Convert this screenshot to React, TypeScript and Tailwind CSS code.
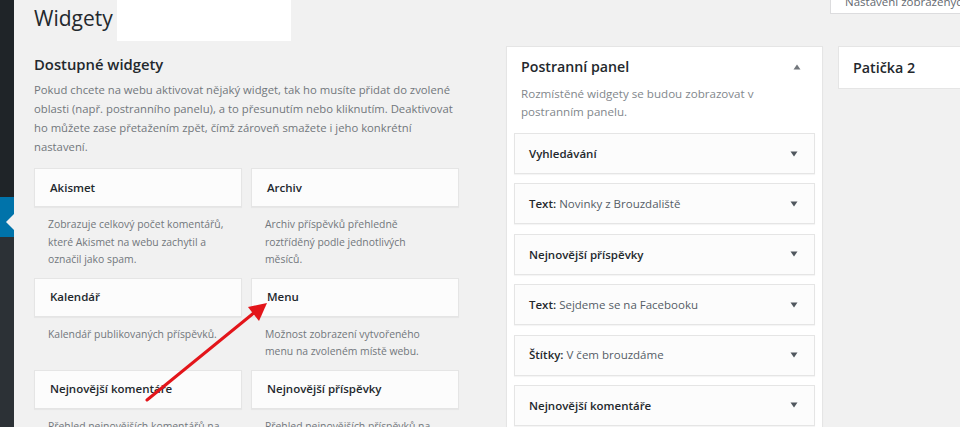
import React from 'react';

const font = { fontFamily: '"Open Sans", "Noto Sans", sans-serif' };

const available = [
  { name: 'Akismet', desc: 'Zobrazuje celkový počet komentářů, které Akismet na webu zachytil a označil jako spam.' },
  { name: 'Archiv', desc: 'Archiv příspěvků přehledně roztříděný podle jednotlivých měsíců.' },
  { name: 'Kalendář', desc: 'Kalendář publikovaných příspěvků.' },
  { name: 'Menu', desc: 'Možnost zobrazení vytvořeného menu na zvoleném místě webu.' },
  { name: 'Nejnovější komentáře', desc: 'Přehled nejnovějších komentářů na webu.' },
  { name: 'Nejnovější příspěvky', desc: 'Přehled nejnovějších příspěvků na webu.' },
];

const placed = [
  { type: 'Vyhledávání', title: '' },
  { type: 'Text:', title: 'Novinky z Brouzdaliště' },
  { type: 'Nejnovější příspěvky', title: '' },
  { type: 'Text:', title: 'Sejdeme se na Facebooku' },
  { type: 'Štítky:', title: 'V čem brouzdáme' },
  { type: 'Nejnovější komentáře', title: '' },
];

const Caret = ({ up }: { up?: boolean }) => (
  <svg width="8" height="6" viewBox="0 0 8 6" className="shrink-0">
    {up ? <path d="M4 0.5 L7.5 5.5 L0.5 5.5 Z" fill="#72777c" /> : <path d="M0.5 0.5 L7.5 0.5 L4 5.5 Z" fill="#50575e" />}
  </svg>
);

const App: React.FC = () => {
  return (
    <div className="relative flex w-[960px] h-[427px] overflow-hidden bg-[#f1f1f1] text-[#23282d]" style={font}>
      {/* admin sidebar */}
      <div className="w-[14px] shrink-0 flex flex-col">
        <div className="h-[197px] shrink-0 bg-[#1f2428]" />
        <div className="relative h-[40px] shrink-0 bg-[#0073aa]">
          <div className="absolute right-0 top-[17px] w-0 h-0 border-y-[8px] border-y-transparent border-r-[8px] border-r-[#f1f1f1]" />
        </div>
        <div className="flex-1 bg-[#2c3136]" />
      </div>

      <div className="flex-1 flex flex-col min-w-0">
        {/* header */}
        <div className="h-[46px] shrink-0 flex items-start">
          <h1 className="ml-[20px] mt-[3px] text-[21px] leading-[30px] font-normal">Widgety</h1>
          <div className="ml-[4px] w-[174px] h-[41px] bg-white" />
          <div className="ml-auto w-[130px] h-[14px] bg-white border-l border-b border-[#dcdcde] overflow-hidden">
            <div className="pl-[14px] -mt-[5px] text-[11.5px] leading-[14px] text-[#646970] whitespace-nowrap">Nastavení zobrazených</div>
          </div>
        </div>

        <div className="flex shrink-0">
          {/* available widgets */}
          <div className="ml-[20px] w-[425px] shrink-0">
            <h2 className="pt-[7px] text-[14.8px] leading-[22px] font-semibold">Dostupné widgety</h2>
            <p className="mt-[5px] text-[11.3px] leading-[19px] text-[#72777c]">
              Pokud chcete na webu aktivovat nějaký widget, tak ho musíte přidat do zvolené oblasti (např. postranního panelu), a to přesunutím nebo kliknutím. Deaktivovat ho můžete zase přetažením zpět, čímž zároveň smažete i jeho konkrétní nastavení.
            </p>
            <div className="mt-[12px] grid grid-cols-2 gap-x-[9px]">
              {available.map((w) => (
                <div key={w.name}>
                  <div className="h-[39px] flex items-center px-[15px] bg-[#fcfcfc] border border-[#e5e5e5] shadow-[0_1px_1px_rgba(0,0,0,0.04)] text-[11.5px] font-semibold whitespace-nowrap">
                    {w.name}
                  </div>
                  <p className="pt-[9px] pb-[9px] pl-[14px] pr-[16px] text-[10.4px] leading-[17.5px] text-[#72777c]">{w.desc}</p>
                </div>
              ))}
            </div>
          </div>

          {/* sidebar area */}
          <div className="ml-[47px] w-[317px] shrink-0 h-[400px] bg-white border border-[#e5e5e5] shadow-[0_1px_1px_rgba(0,0,0,0.04)] px-[7px]">
            <div className="flex items-center justify-between pl-[7px] pr-[14px] pt-[10px]">
              <h3 className="text-[14.2px] leading-[20px] font-semibold">Postranní panel</h3>
              <Caret up />
            </div>
            <p className="pl-[7px] mt-[8px] text-[11.6px] leading-[18px] text-[#82878c]">
              Rozmístěné widgety se budou zobrazovat v postranním panelu.
            </p>
            <div className="mt-[12px] flex flex-col gap-[9.4px]">
              {placed.map((w, i) => (
                <div key={i} className="h-[41px] shrink-0 flex items-center justify-between pl-[14px] pr-[16px] bg-[#fcfcfc] border border-[#e5e5e5] shadow-[0_1px_1px_rgba(0,0,0,0.04)] text-[11.5px]">
                  <span>
                    <span className="font-semibold">{w.type}</span>
                    {w.title && <span className="text-[#555d66]"> {w.title}</span>}
                  </span>
                  <Caret />
                </div>
              ))}
            </div>
          </div>

          {/* footer area */}
          <div className="ml-[15px] flex-1 h-[43px] bg-white border border-[#e5e5e5] border-r-0 flex items-center pl-[14px]">
            <h3 className="text-[14.3px] font-semibold">Patička 2</h3>
          </div>
        </div>
      </div>

      {/* red annotation arrow */}
      <svg className="absolute left-0 top-0 pointer-events-none" width="960" height="427" viewBox="0 0 960 427">
        <line x1="147" y1="400" x2="255" y2="312" stroke="#e3151a" strokeWidth="3" strokeLinecap="round" />
        <path d="M267 303 L248 307 L259 321 Z" fill="#e3151a" />
      </svg>
    </div>
  );
};

export default App;
